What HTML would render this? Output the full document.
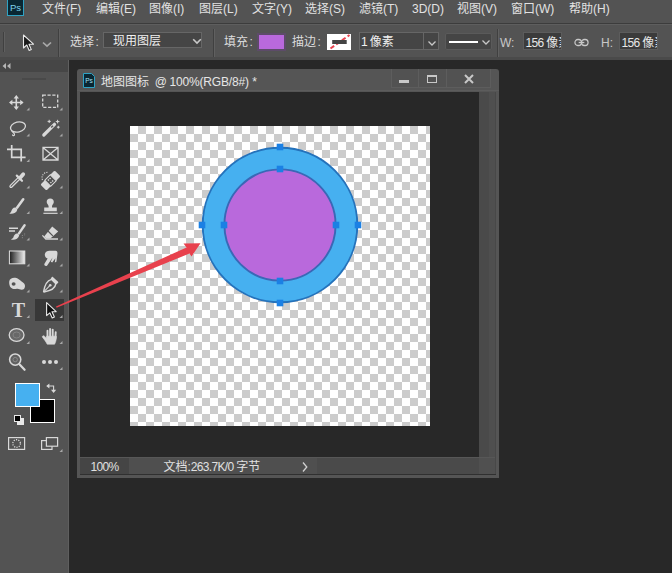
<!DOCTYPE html>
<html lang="zh-CN">
<head>
<meta charset="utf-8">
<title>地图图标 @ 100%(RGB/8#) *</title>
<style>
*{box-sizing:border-box;margin:0;padding:0}
html,body{width:672px;height:573px;overflow:hidden;background:#282828}
body{position:relative;font-family:"Liberation Sans","Noto Sans CJK SC",sans-serif;font-size:12px;color:#dcdcdc;line-height:1}
.abs{position:absolute}
#menubar{left:0;top:0;width:672px;height:24px;background:#535353;border-bottom:1px solid #3c3c3c}
#menubar span{position:absolute;top:-2px;height:23px;line-height:22px;font-size:12px;color:#e2e2e2;white-space:nowrap}
#optbar{left:0;top:24px;width:672px;height:36px;background:#535353;border-top:1px solid #5e5e5e;border-bottom:3px solid #4a4a4a}
#optbar .lbl i{font-style:normal;margin-left:1.5px}
.n{letter-spacing:-0.67px}
#optbar .lbl{position:absolute;font-size:12px;color:#dcdcdc;white-space:nowrap;line-height:14px}
.sep{position:absolute;width:1px;background:#404040;box-shadow:1px 0 0 #606060}
.dd{position:absolute;background:#454545;border:1px solid #666}
.inp{position:absolute;background:#3b3b3b;border:1px solid #5c5c5c;color:#e8e8e8;font-size:12px;overflow:hidden;white-space:nowrap}
#toolhead{left:0;top:60px;width:69px;height:12px;background:#464646;border-right:1px solid #5f5f5f}
#tools{left:0;top:72px;width:69px;height:501px;background:#535353;border-right:1px solid #5f5f5f}
#win{left:77px;top:69px;width:422px;height:409px;background:#555;border-radius:3px 3px 0 0}
#wtitle{left:0;top:0;width:422px;height:23px}
#wtitle .t{position:absolute;left:24px;top:2px;line-height:23px;font-size:12px;color:#e6e6e6;white-space:nowrap}
#wbody{left:3px;top:23px;width:399px;height:365px;background:#282828}
#vscroll{left:402px;top:23px;width:16px;height:365px;background:#4a4a4a;border-right:6px solid #4f4f4f}
#canvas{left:50px;top:34px;width:300px;height:300px;background-color:#fff;
background-image:conic-gradient(#ccc 25%,#fff 0 50%,#ccc 0 75%,#fff 0);background-size:16px 16px}
#status{left:3px;top:388px;width:415px;height:17px;background:#4a4a4a;border-top:1px solid #575757}
</style>
</head>
<body>
<!-- MENU BAR -->
<div id="menubar" class="abs">
  <svg class="abs" style="left:7px;top:-2px" width="17" height="18" viewBox="0 0 17 18"><rect x="0.5" y="0.5" width="16" height="17" fill="#0a2733" stroke="#2fa3c4" stroke-width="1"/><text x="8.5" y="12.5" font-family="Liberation Sans, sans-serif" font-size="9.5" fill="#7fd2ea" text-anchor="middle">Ps</text></svg>
  <span style="left:42px">文件(F)</span>
  <span style="left:96px">编辑(E)</span>
  <span style="left:149px">图像(I)</span>
  <span style="left:199px">图层(L)</span>
  <span style="left:252px">文字(Y)</span>
  <span style="left:305px">选择(S)</span>
  <span style="left:359px">滤镜(T)</span>
  <span style="left:412px">3D(D)</span>
  <span style="left:457px">视图(V)</span>
  <span style="left:511px">窗口(W)</span>
  <span style="left:569px">帮助(H)</span>
</div>

<!-- OPTIONS BAR -->
<div id="optbar" class="abs">
  <div class="sep" style="left:3px;top:7px;height:20px"></div>
  <svg class="abs" style="left:22px;top:9px" width="14" height="18" viewBox="0 0 14 18"><path d="M1.5 1 L1.5 14 L4.8 11 L7.2 16.5 L9.3 15.6 L7 10.3 L11.5 10.2 Z" fill="#1a1a1a" stroke="#e8e8e8" stroke-width="1.1" stroke-linejoin="round"/></svg>
  <svg class="abs" style="left:42px;top:16px" width="10" height="7" viewBox="0 0 10 7"><path d="M1 1.5 L5 5.2 L9 1.5" fill="none" stroke="#a8a8a8" stroke-width="1.7"/></svg>
  <div class="sep" style="left:58px;top:4px;height:28px"></div>
  <div class="lbl" style="left:70px;top:10px">选择<i>:</i></div>
  <div class="dd" style="left:103px;top:7px;width:99px;height:16px"></div>
  <div class="lbl" style="left:113px;top:9px;color:#f0f0f0">现用图层</div>
  <svg class="abs" style="left:191.5px;top:12.5px" width="10" height="7" viewBox="0 0 10 7"><path d="M1.2 1.2 L5 5 L8.8 1.2" fill="none" stroke="#c8c8c8" stroke-width="1.6"/></svg>
  <div class="sep" style="left:213px;top:4px;height:28px"></div>
  <div class="lbl" style="left:224px;top:10px">填充<i>:</i></div>
  <div class="abs" style="left:256.5px;top:7.5px;width:29px;height:18.5px;background:#5d4b69"><div class="abs" style="left:2.5px;top:2px;width:25px;height:14.5px;background:#b969dc"></div></div>
  <div class="lbl" style="left:292px;top:10px">描边<i>:</i></div>
  <div class="abs" style="left:326.5px;top:9px;width:24.5px;height:15.5px;background:#fff;overflow:hidden">
    <svg class="abs" style="left:0;top:0" width="25" height="16" viewBox="0 0 25 16"><path d="M3.5 14.5 L22.5 1" stroke="#e8434f" stroke-width="2" stroke-dasharray="4.5 2.5"/><rect x="5.2" y="6" width="14.5" height="4" fill="#444"/></svg>
  </div>
  <div class="dd" style="left:359px;top:7px;width:80px;height:18px"></div>
  <div class="abs" style="left:423px;top:8px;width:1px;height:16px;background:#666"></div>
  <div class="lbl" style="left:361px;top:10px;color:#f0f0f0"><span class="n">1 </span>像素</div>
  <svg class="abs" style="left:426.5px;top:14.5px" width="10" height="7" viewBox="0 0 10 7"><path d="M1.5 1.5 L5 5 L8.5 1.5" fill="none" stroke="#c8c8c8" stroke-width="1.3"/></svg>
  <div class="dd" style="left:445px;top:8px;width:47px;height:17px;border-color:#5a5a5a;border-radius:2px"></div>
  <div class="abs" style="left:449px;top:16px;width:29px;height:2px;background:#fff"></div>
  <svg class="abs" style="left:480.5px;top:14px" width="10" height="7" viewBox="0 0 10 7"><path d="M1.5 1.5 L5 5 L8.5 1.5" fill="none" stroke="#c8c8c8" stroke-width="1.3"/></svg>
  <div class="sep" style="left:497px;top:4px;height:28px"></div>
  <div class="lbl" style="left:500px;top:11px;color:#c8c8c8">W:</div>
  <div class="inp" style="left:522.5px;top:6.5px;width:39.5px;height:18.5px;line-height:18px;padding-left:2px;padding-top:1px"><span class="n">156 </span>像素</div>
  <svg class="abs" style="left:573.5px;top:13px" width="15" height="9" viewBox="0 0 16 9" preserveAspectRatio="none"><rect x="1" y="1.5" width="7" height="6" rx="3" fill="none" stroke="#c8c8c8" stroke-width="1.3"/><rect x="8" y="1.5" width="7" height="6" rx="3" fill="none" stroke="#c8c8c8" stroke-width="1.3"/><path d="M5 4.5 H11" stroke="#c8c8c8" stroke-width="1.3"/></svg>
  <div class="lbl" style="left:601px;top:11px;color:#c8c8c8">H:</div>
  <div class="inp" style="left:618.5px;top:6.5px;width:39px;height:18.5px;line-height:18px;padding-left:2px;padding-top:1px"><span class="n">156 </span>像素</div>
</div>

<!-- TOOLBAR -->
<div id="toolhead" class="abs">
  <svg class="abs" style="left:2px;top:3px" width="9" height="6" viewBox="0 0 9 6"><path d="M4 0 L0.5 3 L4 6 Z M8.5 0 L5 3 L8.5 6 Z" fill="#b4b4b4"/></svg>
</div>
<div id="tools" class="abs">
  <div class="abs" style="left:22px;top:6px;width:24px;height:2px;background:#494949"></div>
<!--ICONS_START-->
<svg class="abs" style="left:0;top:-72px" width="69" height="573" viewBox="0 0 69 573">
<defs>
  <linearGradient id="gr" x1="0" y1="0" x2="1" y2="0"><stop offset="0" stop-color="#1c1c1c"/><stop offset="1" stop-color="#f0f0f0"/></linearGradient>
</defs>
<g fill="#a8a8a8">
  <path d="M29.5 107.5V110.5H26.5Z"/><path d="M62.5 107.5V110.5H59.5Z"/>
  <path d="M29.5 133.5V136.5H26.5Z"/><path d="M62.5 133.5V136.5H59.5Z"/>
  <path d="M29.5 159V162H26.5Z"/>
  <path d="M29.5 185.5V188.5H26.5Z"/><path d="M62.5 185.5V188.5H59.5Z"/>
  <path d="M29.5 211V214H26.5Z"/><path d="M62.5 211V214H59.5Z"/>
  <path d="M29.5 237.5V240.5H26.5Z"/><path d="M62.5 237.5V240.5H59.5Z"/>
  <path d="M29.5 263.5V266.5H26.5Z"/><path d="M62.5 263.5V266.5H59.5Z"/>
  <path d="M29.5 289.5V292.5H26.5Z"/><path d="M62.5 289.5V292.5H59.5Z"/>
  <path d="M29.5 315V318H26.5Z"/>
  <path d="M29.5 341V344H26.5Z"/><path d="M62.5 341V344H59.5Z"/>
  <path d="M62.5 367V370H59.5Z"/><path d="M62.5 449V452H59.5Z"/>
</g>
<!-- selected tool bg -->
<rect x="35" y="299" width="29" height="22" fill="#383838"/>
<path d="M62.5 315V318H59.5Z" fill="#a8a8a8"/>
<g fill="none" stroke="#d8d8d8" stroke-width="1.4">
  <!-- 1 move -->
  <path d="M16.3 97V108.5M10.5 102.5H22.5" stroke-width="1.6"/>
  <path d="M16.3 95L13.6 98.4H19ZM16.3 110L13.6 106.6H19ZM9 102.5L12.4 99.8V105.2ZM23.6 102.5L20.2 99.8V105.2Z" fill="#d8d8d8" stroke="none"/>
  <!-- 2 marquee -->
  <rect x="42.7" y="95.2" width="15" height="12.2" stroke-dasharray="3.2 1.6" stroke-width="1.3"/>
  <!-- 3 lasso -->
  <ellipse cx="18" cy="127" rx="7.6" ry="5" transform="rotate(-14 18 127)" stroke-width="1.3"/>
  <path d="M11.5 130.5C12.5 132.5 15 133 14.5 134.8C14 136.3 12.3 135.8 12.6 134.5" stroke-width="1.2"/>
  <!-- 4 wand -->
  <path d="M43.8 135L54.5 124.3" stroke-width="3.2" stroke-linecap="round"/>
  <path d="M51.2 127.6L53 125.8" stroke="#555" stroke-width="1.4"/>
  <path d="M49.2 119.8V123M47.6 121.4H50.8M57.6 119.8V123.4M55.8 121.6H59.4M58.3 125.8V128.6M56.9 127.2H59.7" stroke-width="1"/>
  <!-- 5 crop -->
  <path d="M11.7 145V157.4H25.6M7 149.4H21.2V161.6" stroke-width="1.7"/>
  <!-- 6 frame -->
  <path d="M43 147.4H58V160H43ZM43 147.4L58 160M58 147.4L43 160" stroke-width="1.3"/>
  <!-- 7 eyedropper -->
  <path d="M18.4 177.4L10.4 185.4C9.2 186.6 10.6 188.2 11.9 187L20 179" stroke-width="1.3"/>
  <path d="M16.8 175.6L22 180.8" stroke-width="2.2" stroke-linecap="round"/>
  <path d="M20.6 177.2L23.2 174.2" stroke-width="3.8" stroke-linecap="round"/>
  <!-- 8 bandaid -->
  <g transform="rotate(-45 50.5 180.5)">
    <rect x="40.5" y="176.3" width="20" height="8.4" rx="1.2" fill="#d8d8d8" stroke="none"/>
    <rect x="46.6" y="176.3" width="7.8" height="8.4" fill="#535353" stroke="#d8d8d8" stroke-width="1"/>
    <path d="M48.6 178.7h1.4M51 178.7h1.4M48.6 182.3h1.4M51 182.3h1.4" stroke-width="1.4"/>
  </g>
  <path d="M42.5 180C41 176 43.5 172.5 47.5 172.3" stroke-width="1.1" stroke-dasharray="1.2 1.2"/>
  <!-- 9 brush -->
  <path d="M23.2 199.3L17.2 207.6" stroke-width="2.6" stroke-linecap="round"/>
  <path d="M15.8 207.6C13.2 207.2 11.8 209.3 11.3 211.3C10.9 212.6 9.8 213.3 9.2 213.6C12.5 214.3 16.6 213.2 17.4 209.6Z" fill="#d8d8d8" stroke="none"/>
  <!-- 10 stamp -->
  <path d="M50.2 198.6C47.9 198.6 46.7 200.2 46.7 201.9C46.7 203.7 48.6 204.6 48.6 206.4V207.6H44.2V211.3H56.8V207.6H52V206.4C52 204.6 53.8 203.7 53.8 201.9C53.8 200.2 52.5 198.6 50.2 198.6Z" fill="#d8d8d8" stroke="none"/>
  <path d="M43.4 213.3H57.6" stroke-width="1.2"/>
  <!-- 11 history brush -->
  <path d="M24.6 225.2L19 233.4" stroke-width="2.4" stroke-linecap="round"/>
  <path d="M17.8 233.6C15.4 233.2 14 235.2 13.5 237.1C13.1 238.4 11.6 239.2 11 239.5C14.2 240.3 18.4 239.2 19.2 235.6Z" fill="#d8d8d8" stroke="none"/>
  <path d="M9 228.2H18M9 231H15" stroke-width="1.5"/>
  <path d="M22.4 235V239M24.6 233.5V236" stroke="#8a8a8a" stroke-width="1" stroke-dasharray="1 1.2"/>
  <!-- 12 eraser -->
  <path d="M52.2 226.6L58.2 231.4L50.4 238.6L46.2 238.4L44.2 236.6Z" fill="#d8d8d8" stroke="none"/>
  <path d="M48 231L52.8 235.8" stroke="#535353" stroke-width="1.2"/>
  <path d="M42.4 235.4L45.8 239H58" stroke-width="1.3"/>
  <!-- 13 gradient -->
  <rect x="9.4" y="251" width="15.4" height="12.8" fill="url(#gr)" stroke="#e0e0e0" stroke-width="1"/>
  <!-- 14 smudge -->
  <path d="M45.5 252.5C47 250.6 50 250.8 52 250.8H55.6C57.4 250.8 57.6 252.6 57.4 254.4L56.4 261.8L54.8 262.6L55.4 258.2L52.2 262.4L50.8 261.8L52.6 257.6L47.2 265.4C46 266.8 43.4 265.6 44.6 263.6L47.6 258.4C45.4 258.4 43.8 255 45.5 252.5Z" fill="#d8d8d8" stroke="none"/>
  <!-- 15 sponge -->
  <path d="M9.2 281.5C9.6 278.6 12.5 277.4 15.4 277.8C18 278.2 19.6 280 21.6 281.4C23.6 282.8 25.2 283.6 25 286.2C24.8 288.6 23.6 289.8 21.8 289.8C19.6 289.8 19.2 288.6 17 288.8C14.6 289 12.8 289.4 11 287.8C9.4 286.2 9 283.6 9.2 281.5Z" fill="#d8d8d8" stroke="none"/>
  <ellipse cx="13.6" cy="284" rx="2" ry="1.7" fill="#535353" stroke="none"/>
  <!-- 16 pen -->
  <path d="M52.4 277.4L57.6 282.2L55.6 284.4C55.4 287 52 290.4 44 292L43.6 291.6C45 284 48.4 280.2 51 279.6Z" fill="none" stroke-width="1.4" stroke-linejoin="round"/>
  <path d="M52.4 277.4L57.6 282.2L55.6 284.4L50.6 279.6Z" fill="#d8d8d8" stroke="none"/>
  <path d="M44.2 291.4L49.6 285.8" stroke-width="1.1"/>
  <circle cx="50.2" cy="285.2" r="1.3" fill="#d8d8d8" stroke="none"/>
  <!-- 19 ellipse -->
  <ellipse cx="16.6" cy="335" rx="7.4" ry="6.4" fill="#686868" stroke-width="1.3"/>
  <ellipse cx="16.6" cy="335" rx="3.6" ry="3" stroke="#858585" stroke-width="0.9"/>
  <!-- 20 hand -->
  <path d="M47.5 337.5V330.8M50.1 337.5V329M52.7 337.5V329.6M55.4 338.5L55.7 332.2" stroke-width="1.9" stroke-linecap="round"/>
  <path d="M46.5 336.2H56.4C56.4 339.6 55.8 342 54.6 344.2H47.2C46.2 342.2 44.6 339.8 42.6 337.4C41.8 336.2 43.2 335.2 44.2 336L46.5 338.2Z" fill="#d8d8d8" stroke="#d8d8d8" stroke-width="0.6" stroke-linejoin="round"/>
  <!-- 21 zoom -->
  <circle cx="15.2" cy="359.6" r="5.6" fill="#606060" stroke-width="1.5"/>
  <circle cx="15.2" cy="359.6" r="2.2" stroke="#8c8c8c" stroke-width="0.9"/>
  <path d="M19.4 364.2L24.6 369.8" stroke-width="2.2" stroke-linecap="round"/>
  <!-- 22 dots -->
  <g fill="#d8d8d8" stroke="none"><circle cx="44" cy="362" r="2"/><circle cx="50" cy="362" r="2"/><circle cx="56" cy="362" r="2"/></g>
  <!-- swap arrows -->
  <path d="M47.5 386H53.6V391" stroke-width="1.1"/>
  <path d="M46.2 386L49.4 383.4V388.6ZM53.6 393L51 389.8H56.2Z" fill="#d8d8d8" stroke="none"/>
  <!-- quick mask -->
  <rect x="8.6" y="437.6" width="16" height="11.8" stroke-width="1.2"/>
  <circle cx="16.6" cy="443.5" r="3.8" stroke-width="1.3" stroke-dasharray="1.2 1.2"/>
  <!-- screen mode -->
  <rect x="41.6" y="440.6" width="10.4" height="8.8" stroke-width="1.2"/>
  <rect x="46.4" y="437.6" width="11.2" height="8.6" fill="#535353" stroke-width="1.2"/>
</g>
<!-- 17 T -->
<text x="18.3" y="317" font-family="Liberation Serif, serif" font-size="20" font-weight="bold" fill="#d8d8d8" text-anchor="middle">T</text>
<!-- 18 arrow selected -->
<path d="M46.6 302.6V315.6L49.8 312.8L52.2 318L54.4 317L52 311.8L56.2 311.6Z" fill="#101010" stroke="#e8e8e8" stroke-width="1.1" stroke-linejoin="round"/>
<!-- swatches -->
<rect x="30.5" y="399.5" width="24" height="23" fill="#000" stroke="#fff" stroke-width="1"/>
<rect x="15.5" y="383.5" width="24" height="23" fill="#46b0f0" stroke="#fff" stroke-width="1"/>
<rect x="17.5" y="418.5" width="6" height="6" fill="#e8e8e8" stroke="#e8e8e8" stroke-width="1"/>
<rect x="14.5" y="415.5" width="6" height="6" fill="#000" stroke="#e8e8e8" stroke-width="1"/>
</svg>
<!--ICONS_END-->
</div>

<!-- DOCUMENT WINDOW -->
<div id="win" class="abs">
  <div id="wtitle" class="abs">
    <svg class="abs" style="left:6px;top:4px" width="12" height="15" viewBox="0 0 12 15"><path d="M0.5 0.5 H8.5 L11.5 3.5 V14.5 H0.5 Z" fill="#0a2733" stroke="#2fa3c4"/><text x="6" y="9.8" font-family="Liberation Sans, sans-serif" font-size="6.5" fill="#a8e2f2" text-anchor="middle">Ps</text></svg>
    <div class="t">地图图标 <span style="margin-left:2.5px;margin-right:-1px">@</span> <span style="letter-spacing:-0.15px">100%(RGB/8#) *</span></div>
    <div class="abs" style="left:314px;top:0;width:100px;height:19px;background:#525252;border-left:1px solid #5d5d5d;border-right:1px solid #5d5d5d;border-bottom:1px solid #5d5d5d"></div>
    <div class="abs" style="left:341px;top:0;width:1px;height:18px;background:#5d5d5d"></div>
    <div class="abs" style="left:369px;top:0;width:1px;height:18px;background:#5d5d5d"></div>
    <div class="abs" style="left:0;top:21px;width:422px;height:1px;background:#5c5c5c"></div>
    <div class="abs" style="left:322px;top:11px;width:10px;height:3px;background:#c8c8c8"></div>
    <div class="abs" style="left:350px;top:5.5px;width:10px;height:8.5px;border:1.5px solid #c8c8c8;border-top-width:2.5px"></div>
    <svg class="abs" style="left:387px;top:5px" width="10" height="10" viewBox="0 0 10 10"><path d="M1 1 L9 9 M9 1 L1 9" stroke="#c8c8c8" stroke-width="2"/></svg>
  </div>
  <div id="wbody" class="abs">
    <div id="canvas" class="abs"></div>
  </div>
  <div id="vscroll" class="abs"></div>
  <div class="abs" style="left:418px;top:23px;width:1px;height:383px;background:#484848"></div>
  <div id="status" class="abs">
    <div class="abs" style="left:0;top:0;width:237px;height:16px;background:#4f4f4f"></div>
    <div class="abs" style="left:0;top:0;width:49px;height:16px;background:#454545"></div>
    <div class="abs" style="left:399px;top:0;width:16px;height:16px;background:#505050"></div>
    <div class="abs n" style="left:10.5px;top:3px;font-size:12px;color:#e0e0e0">100%</div>
    <div class="abs" style="left:83.5px;top:3px;font-size:12px;color:#e0e0e0;white-space:nowrap">文档:<span class="n">263.7K/0 </span>字节</div>
    <svg class="abs" style="left:222px;top:4px" width="6" height="10" viewBox="0 0 6 10"><path d="M1 0.5 L4.8 5 L1 9.5" fill="none" stroke="#d0d0d0" stroke-width="1.3"/></svg>
  </div>
  <div class="abs" style="left:3px;top:405px;width:416px;height:1px;background:#303030"></div>
</div>

<!-- SHAPES OVERLAY -->
<svg class="abs" style="left:0;top:0" width="672" height="573" viewBox="0 0 672 573">
  <circle cx="280" cy="225" r="77.3" fill="#46b0f0" stroke="#2572bb" stroke-width="1.9"/>
  <circle cx="280" cy="225" r="55.6" fill="#b969dc" stroke="#3a68b6" stroke-width="1.9"/>
  <g fill="#1b80e4">
    <rect x="276.7" y="143.7" width="6.6" height="6.6"/><rect x="276.7" y="165.7" width="6.6" height="6.6"/>
    <rect x="276.7" y="277.7" width="6.6" height="6.6"/><rect x="276.7" y="299.7" width="6.6" height="6.6"/>
    <rect x="198.7" y="221.7" width="6.6" height="6.6"/><rect x="220.7" y="221.7" width="6.6" height="6.6"/>
    <rect x="332.7" y="221.7" width="6.6" height="6.6"/><rect x="354.7" y="221.7" width="6.6" height="6.6"/>
  </g>
  <path d="M56 306.4 L186.5 247.5 L183.5 243.5 L200.5 243.3 L191.5 256.5 L189.5 253.5 L56.6 307.8 Z" fill="#e8414d"/>
</svg>
</body>
</html>
